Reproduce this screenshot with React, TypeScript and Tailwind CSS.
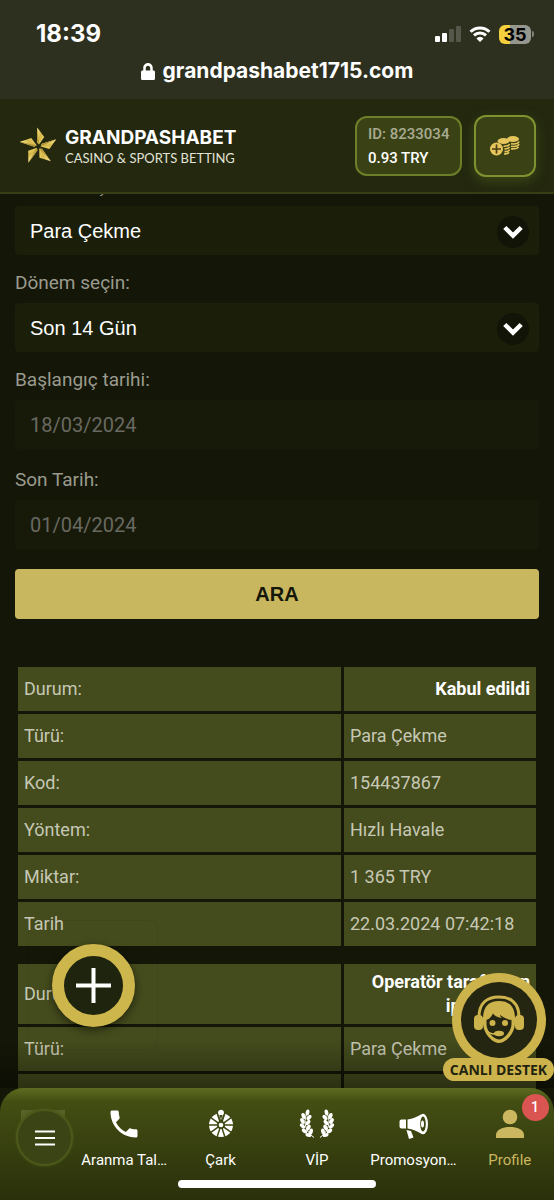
import { useState } from "react";
import { FaLock } from "react-icons/fa";
import { MdPhone } from "react-icons/md";

const firstTransaction = [
  { label: "Türü:", value: "Para Çekme" },
  { label: "Kod:", value: "154437867" },
  { label: "Yöntem:", value: "Hızlı Havale" },
  { label: "Miktar:", value: "1 365 TRY" },
  { label: "Tarih", value: "22.03.2024 07:42:18" },
];

const secondTransaction = [
  { label: "Türü:", value: "Para Çekme" },
  { label: "Kod:", value: "" },
];

const StatusBar = () => (
  <div className="h-[99px] shrink-0 bg-[#2e301f] pt-4 text-white font-['Inter',sans-serif] font-bold">
    <div className="flex h-9 items-center justify-between pl-9 pr-5">
      <span className="text-[24px]">18:39</span>
      <div className="flex items-center gap-2">
        <svg width="26" height="16" viewBox="0 0 26 16">
          <rect x="0" y="10" width="5" height="6" rx="1" fill="#fff" />
          <rect x="7" y="7" width="5" height="9" rx="1" fill="#fff" />
          <rect x="14" y="3" width="5" height="13" rx="1" fill="#55574a" />
          <rect x="21" y="0" width="5" height="16" rx="1" fill="#55574a" />
        </svg>
        <svg width="22" height="16" viewBox="0 0 22 16" fill="none">
          <path
            d="M1.5 5.8a13.6 13.6 0 0 1 19 0M5 9.4a8.6 8.6 0 0 1 12 0"
            stroke="#fff"
            strokeWidth="3"
          />
          <path d="M11 16l-3.6-3.6a5 5 0 0 1 7.2 0z" fill="#fff" />
        </svg>
        <div className="flex items-center">
          <span className="h-[19px] w-8 rounded-md bg-linear-to-r from-[#f5d03e] from-35% to-[#95968e] to-35% text-center text-[18px] leading-[19px] text-black">
            35
          </span>
          <span className="ml-px h-[6px] w-[2px] rounded-r bg-[#80827a]" />
        </div>
      </div>
    </div>
    <div className="flex h-[38px] items-center justify-center gap-2 text-[21px]">
      <FaLock className="h-[17px] w-[14px]" preserveAspectRatio="none" />
      <span>grandpashabet1715.com</span>
    </div>
  </div>
);

const Logo = () => (
  <a href="#" className="flex items-center gap-2">
    <svg width="37" height="38" viewBox="60 96 112 115">
      <defs>
        <linearGradient id="blade" x1="0" y1="0" x2="1" y2="1">
          <stop offset="0" stopColor="#fff3a0" />
          <stop offset="0.5" stopColor="#d6b84a" />
          <stop offset="1" stopColor="#f3dd74" />
        </linearGradient>
      </defs>
      {[-3, 69, 141, 213, 285].map((angle) => (
        <g key={angle} transform={`translate(116 155) rotate(${angle})`}>
          <path d="M-1-58L19-28L2-6L-4-12Z" fill="url(#blade)" />
          <path d="M-1-58L2-6L-4-12Z" fill="#b3963a" />
        </g>
      ))}
    </svg>
    <span className="flex flex-col pt-1">
      <span className="font-['Inter',sans-serif] text-[19px] font-bold leading-5 text-white">
        GRANDPASHABET
      </span>
      <span className="font-['Lato',sans-serif] text-[13px] leading-5 text-[#e2e3d6]">
        CASINO &amp; SPORTS BETTING
      </span>
    </span>
  </a>
);

const CoinsIcon = () => (
  <svg width="30" height="22" viewBox="0 0 30 22" fill="none">
    <ellipse cx="23" cy="4" rx="6" ry="3" fill="#e6c65c" />
    <ellipse cx="13.5" cy="6" rx="6" ry="3" fill="#e6c65c" />
    <path
      d="M29 6.5c-.5 1.700-4 2.700-8 2.300M29 9c-.5 1.700-4 2.700-8 2.300M28.500 11.800c-.7 1.400-3.500 2.200-7.500 2M19.500 9c-.5 1.500-3 2.300-6 2.200M19.500 11.700c-.5 1.500-2.500 2.100-5 2.200M19.500 14.400c-.5 1.500-2.500 2.100-5 2.200M19 17.200c-.7 1-2.300 1.700-5 1.800"
      stroke="#e6c65c"
      strokeWidth="1.600"
    />
    <circle cx="6.500" cy="14" r="6.500" fill="#e6c65c" />
    <path d="M6.500 9.500v9M2 14h9" stroke="#4a3d12" strokeWidth="1.700" />
  </svg>
);

const Header = () => (
  <header className="relative z-10 flex h-[95px] shrink-0 items-center justify-between border-b-2 border-[#363f13] bg-[#23280f] pl-5 pr-[18px]">
    <Logo />
    <div className="flex items-center gap-3">
      <div className="flex h-[60px] w-[107px] flex-col justify-center rounded-xl border-2 border-[#6d7f28] bg-[#3a4215] pl-[11px] text-[15px] font-medium leading-6">
        <span className="text-[#a8ab92]">ID: 8233034</span>
        <span className="text-white">0.93 TRY</span>
      </div>
      <button
        aria-label="Deposit"
        className="flex size-[62px] items-center justify-center rounded-xl border-2 border-[#7e922f] bg-[#3a4215] shadow-[0_4px_12px_#3d4716]"
      >
        <CoinsIcon />
      </button>
    </div>
  </header>
);

type SelectProps = { id: string; label: string; option: string };

const SelectField = ({ id, label, option }: SelectProps) => (
  <div>
    <label htmlFor={id} className="mb-2 block leading-6">
      {label}
    </label>
    <div className="relative">
      <select
        id={id}
        className="h-[49px] w-full appearance-none rounded-sm bg-[#1b1f0a] px-[15px] font-['Liberation_Sans',sans-serif] text-[20px] text-white outline-none"
      >
        <option>{option}</option>
      </select>
      <span className="pointer-events-none absolute right-[10px] top-[10px] flex size-8 items-center justify-center rounded-full bg-[#111406]">
        <svg width="20" height="14" viewBox="0 0 20 14" fill="none">
          <path d="M1.800 2.500L10 10.500L18.200 2.500" stroke="#fff" strokeWidth="4.500" />
        </svg>
      </span>
    </div>
  </div>
);

type DateProps = {
  id: string;
  label: string;
  value: string;
  onChange: (value: string) => void;
};

const DateField = ({ id, label, value, onChange }: DateProps) => (
  <div>
    <label htmlFor={id} className="mb-2 block leading-6">
      {label}
    </label>
    <input
      id={id}
      value={value}
      onChange={(e) => onChange(e.target.value)}
      className="h-[49px] w-full rounded-sm bg-[#181a09] px-[15px] text-[20px] text-[#686961] outline-none"
    />
  </div>
);

type TableProps = {
  status: string;
  rows: { label: string; value: string }[];
};

const TransactionTable = ({ status, rows }: TableProps) => (
  <table className="w-full table-fixed border-separate border-spacing-[3px] text-[18px] leading-6 text-[#c6c8b5]">
    <colgroup>
      <col />
      <col className="w-[192px]" />
    </colgroup>
    <tbody>
      <tr>
        <td className="h-11 bg-[#444b1c] p-[6px]">Durum:</td>
        <td className="bg-[#444b1c] p-[6px] text-right font-bold text-white">
          {status}
        </td>
      </tr>
      {rows.map((row) => (
        <tr key={row.label}>
          <td className="h-11 bg-[#444b1c] p-[6px]">{row.label}</td>
          <td className="bg-[#444b1c] p-[6px]">{row.value}</td>
        </tr>
      ))}
    </tbody>
  </table>
);

const SupportButton = () => (
  <button
    aria-label="Canlı Destek"
    className="absolute bottom-full right-0 mb-[7px] flex w-[111px] flex-col items-center"
  >
    <span className="flex size-[94px] items-center justify-center rounded-full bg-[#cdb34c]">
      <span className="flex size-[76px] items-center justify-center rounded-full bg-[#252611]">
        <svg width="50" height="50" viewBox="0 0 50 50" fill="none">
          <path d="M5 22C5 8 13 2 25 2s20 6 20 20" stroke="#cdb34c" strokeWidth="3" />
          <path
            d="M9 24C9 11 15 6 25 6s16 5 16 18v4c0 10-9 20-16 20S9 38 9 28z"
            fill="#cdb34c"
          />
          <path
            d="M12.500 25c3-1 5-3.500 6.500-6.500 1.500 2.500 5 4 9 4.500-1.500-1-2-2-2-3 3.500 2.500 7.500 4.500 11.500 5v4c0 7-7 15.500-12.500 15.500S12.500 36 12.500 29z"
            fill="#252611"
          />
          <rect x="0" y="20" width="9" height="15" rx="4" fill="#cdb34c" />
          <rect x="41" y="20" width="9" height="15" rx="4" fill="#cdb34c" />
          <circle cx="18.500" cy="28" r="3" fill="#cdb34c" />
          <circle cx="31" cy="28" r="3" fill="#cdb34c" />
          <path d="M11 33c2 5 7 6.500 13 6" stroke="#cdb34c" strokeWidth="1.800" />
          <ellipse cx="25" cy="38.500" rx="5" ry="2.800" fill="#cdb34c" />
        </svg>
      </span>
    </span>
    <span className="-mt-[9px] h-[23px] w-full rounded-full bg-[#cdb34c] text-center font-['Open_Sans',sans-serif] text-[14px] font-bold leading-[23px] text-[#22230f]">
      CANLI DESTEK
    </span>
  </button>
);

const WheelIcon = () => (
  <svg width="36" height="36" viewBox="0 0 36 36" fill="#fff">
    <circle cx="18" cy="19" r="12" />
    {[18, 54, 90, 126, 162].map((angle) => (
      <path
        key={angle}
        d="M18 6v26"
        stroke="#3d4711"
        strokeWidth="1.500"
        transform={`rotate(${angle} 18 19)`}
      />
    ))}
    <circle cx="18" cy="19" r="4" fill="#3d4711" />
    <circle cx="18" cy="19" r="2.300" />
    <path
      d="M18 15.500L14.500 7.500a3.600 3.600 0 1 1 7 0z"
      stroke="#3d4711"
      strokeWidth="1.200"
    />
    <path d="M18 13.500l-1.600-4.500h3.200z" fill="#3d4711" />
  </svg>
);

const laurelLeaves = [
  [8.500, 6.500, 10],
  [4.500, 10, -20],
  [10, 11.500, 40],
  [3.500, 15, -30],
  [9, 16.500, 35],
  [3.500, 20, -45],
  [9.500, 21.500, 25],
  [5.500, 25, -60],
  [12, 25.500, 10],
  [9.500, 29, -75],
];

const LaurelIcon = () => (
  <svg width="36" height="36" viewBox="0 0 36 36" fill="#fff">
    {[false, true].map((flip) => (
      <g key={String(flip)} transform={flip ? "translate(36 0) scale(-1 1)" : undefined}>
        {laurelLeaves.map(([x, y, angle]) => (
          <ellipse
            key={`${x}-${y}`}
            cx={x}
            cy={y}
            rx="1.900"
            ry="3.100"
            transform={`rotate(${angle} ${x} ${y})`}
          />
        ))}
        <path d="M7.500 8C4 17 7 26 15 31.500" stroke="#fff" strokeWidth="1" fill="none" />
      </g>
    ))}
  </svg>
);

const MegaphoneIcon = () => (
  <svg width="36" height="36" viewBox="0 0 36 36" fill="#fff">
    <path d="M6.500 13.500H11v9H6.500c-1.500 0-2-1-2-2.500v-4c0-1.500.5-2.500 2-2.500z" />
    <path d="M12.500 13.500C18 13 22.500 10.500 26 8.500v19c-3.500-2-8-4.500-13.500-5z" />
    <ellipse cx="28" cy="18" rx="5" ry="10.300" />
    <ellipse cx="28" cy="18" rx="2.800" ry="7.500" fill="#3d4711" />
    <ellipse cx="27.500" cy="18" rx="1.500" ry="3.500" />
    <path d="M11.500 24l4.500 1 2.500 6.500-4.500 1.500z" />
  </svg>
);

const PersonIcon = () => (
  <svg width="36" height="36" viewBox="0 0 36 36" fill="currentColor">
    <circle cx="18" cy="11" r="7.300" />
    <path d="M4 32v-3c0-5.500 7-8 14-8s14 2.500 14 8v3z" />
  </svg>
);

const navItems = [
  { label: "Aranma Tal…", icon: <MdPhone className="size-9" />, active: false },
  { label: "Çark", icon: <WheelIcon />, active: false },
  { label: "VİP", icon: <LaurelIcon />, active: false },
  { label: "Promosyon…", icon: <MegaphoneIcon />, active: false },
  { label: "Profile", icon: <PersonIcon />, active: true },
];

const BottomNav = () => (
  <div className="relative z-10 -mt-5 shrink-0">
    <div className="pointer-events-none absolute bottom-full left-0 h-12 w-full bg-linear-to-b from-transparent to-black/35" />
    <div className="pointer-events-none absolute bottom-full left-7 mb-[38px] flex size-[130px] items-center justify-center rounded-lg border border-black/5">
      <button
        aria-label="Add"
        className="pointer-events-auto flex size-[83px] items-center justify-center rounded-full border-12 border-[#cdb64b] bg-[#1f240f] shadow-[0_3px_8px_rgba(0,0,0,0.5)]"
      >
        <svg width="35" height="35" viewBox="0 0 35 35" stroke="#fff" strokeWidth="4">
          <path d="M17.500 0v35M0 17.500h35" />
        </svg>
      </button>
    </div>
    <SupportButton />
    <nav className="flex h-28 flex-col overflow-hidden rounded-t-[24px] bg-linear-to-b from-[#5d6c1f] via-[#434e13] via-12% to-[#2a300b]">
      <div className="flex pl-4 pt-[18px]">
        <div className="relative w-[60px] shrink-0">
          <span className="absolute left-[5px] top-1 h-4 w-11 bg-[#566226]" />
          <button
            aria-label="Menu"
            className="relative mt-[3px] flex size-[57px] items-center justify-center rounded-full border-2 border-[#4b591a] bg-[#3b4415] shadow-[0_0_3px_#4b591a]"
          >
            <svg width="20" height="16" viewBox="0 0 20 16" stroke="#fff" strokeWidth="2.200">
              <path d="M0 1.500h20M0 8h20M0 14.500h20" />
            </svg>
          </button>
        </div>
        <div className="-mr-1 grid flex-1 grid-cols-5">
          {navItems.map((item) => (
            <a
              key={item.label}
              href="#"
              className={`relative flex flex-col items-center gap-2 text-[15px] leading-5 ${
                item.active ? "text-[#cbb75f]" : "text-white"
              }`}
            >
              {item.icon}
              <span>{item.label}</span>
              {item.active && (
                <span className="absolute -top-3 left-[60px] size-[27px] rounded-full bg-[#da5552] text-center text-[14px] font-medium leading-[27px] text-white">
                  1
                </span>
              )}
            </a>
          ))}
        </div>
      </div>
      <div className="mx-auto mt-[10px] h-2 w-[198px] rounded-full bg-white" />
    </nav>
  </div>
);

const App = () => {
  const [startDate, setStartDate] = useState<string>("18/03/2024");
  const [endDate, setEndDate] = useState<string>("01/04/2024");

  return (
    <div className="flex h-screen flex-col overflow-hidden bg-[#141607] font-['Roboto',sans-serif]">
      <StatusBar />
      <Header />
      <main className="min-h-0 flex-1 overflow-hidden px-[15px] text-[19px] text-[#9a9b8e]">
        <form
          onSubmit={(e) => e.preventDefault()}
          className="-mt-5 flex flex-col gap-4"
        >
          <SelectField id="type" label="Durum seçin:" option="Para Çekme" />
          <SelectField id="period" label="Dönem seçin:" option="Son 14 Gün" />
          <DateField
            id="start"
            label="Başlangıç tarihi:"
            value={startDate}
            onChange={setStartDate}
          />
          <div className="pt-[3px]">
            <DateField
              id="end"
              label="Son Tarih:"
              value={endDate}
              onChange={setEndDate}
            />
          </div>
          <button
            type="submit"
            className="mt-1 h-[50px] rounded-sm bg-[#c9b760] font-['Liberation_Sans',sans-serif] text-[20px] font-bold text-[#14160a]"
          >
            ARA
          </button>
        </form>
        <div className="mt-[45px] flex flex-col gap-3">
          <TransactionTable status="Kabul edildi" rows={firstTransaction} />
          <TransactionTable
            status="Operatör tarafından iptal edildi"
            rows={secondTransaction}
          />
        </div>
      </main>
      <BottomNav />
    </div>
  );
};

export default App;
